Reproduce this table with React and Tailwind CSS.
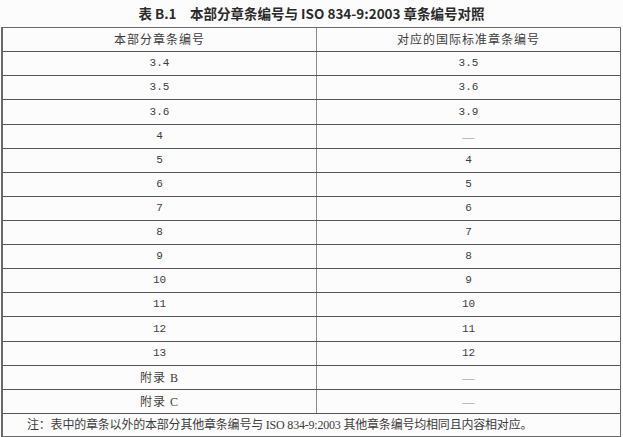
import React from "react";

const rows = [
  { a: "3.4", b: "3.5", h: "h-[24px]", mono: true },
  { a: "3.5", b: "3.6", h: "h-[24px]", mono: true },
  { a: "3.6", b: "3.9", h: "h-[25px]", mono: true },
  { a: "4", b: "—", h: "h-[24px]", mono: true },
  { a: "5", b: "4", h: "h-[24px]", mono: true },
  { a: "6", b: "5", h: "h-[24px]", mono: true },
  { a: "7", b: "6", h: "h-[24px]", mono: true },
  { a: "8", b: "7", h: "h-[24px]", mono: true },
  { a: "9", b: "8", h: "h-[24px]", mono: true },
  { a: "10", b: "9", h: "h-[24px]", mono: true },
  { a: "11", b: "10", h: "h-[24px]", mono: true },
  { a: "12", b: "11", h: "h-[25px]", mono: true },
  { a: "13", b: "12", h: "h-[24px]", mono: true },
  { a: "附录 B", b: "—", h: "h-[24px]", mono: false },
  { a: "附录 C", b: "—", h: "h-[24px]", mono: false },
];

const cjk = "font-['Liberation_Serif','Noto_Sans_CJK_SC',serif]";
const mono = "font-['Liberation_Mono','Noto_Sans_CJK_SC',monospace]";

export default function App() {
  return (
    <div className="w-[623px] h-[437px] bg-[#fcfcfc] overflow-hidden text-[#3c3c3c]">
      <div className="h-[27px] flex items-center justify-center">
        <div className="font-['Noto_Sans_CJK_SC',sans-serif] font-bold text-[13.5px] leading-none text-[#2a2a2a]">
          表 B.1　本部分章条编号与 ISO 834-9:2003 章条编号对照
        </div>
      </div>
      <div className="ml-[1px] w-[620px] border-l-2 border-r border-t border-b border-[#6a6a6a]">
        <div className="flex h-[24px] border-b border-[#555]">
          <div className={`w-[314px] shrink-0 border-r border-[#8a8a8a] flex items-center justify-center text-[12px] tracking-[1px] ${cjk}`}>
            本部分章条编号
          </div>
          <div className={`flex-1 flex items-center justify-center text-[12px] tracking-[1px] ${cjk}`}>
            对应的国际标准章条编号
          </div>
        </div>
        {rows.map((r, i) => (
          <div key={i} className={`flex ${r.h} border-b border-[#555]`}>
            <div className={`w-[314px] shrink-0 border-r border-[#8a8a8a] flex items-center justify-center ${r.mono ? `text-[11px] ${mono}` : `text-[12px] tracking-[1px] ${cjk}`}`}>
              {r.a}
            </div>
            <div className={`flex-1 flex items-center justify-center ${r.b === "—" ? `text-[12px] text-[#888] ${cjk}` : `text-[11px] ${mono}`}`}>
              {r.b}
            </div>
          </div>
        ))}
        <div className={`h-[22px] flex items-center pl-[24px] text-[12px] tracking-[-0.2px] ${cjk}`}>
          注：表中的章条以外的本部分其他章条编号与 ISO 834-9:2003 其他章条编号均相同且内容相对应。
        </div>
      </div>
    </div>
  );
}
